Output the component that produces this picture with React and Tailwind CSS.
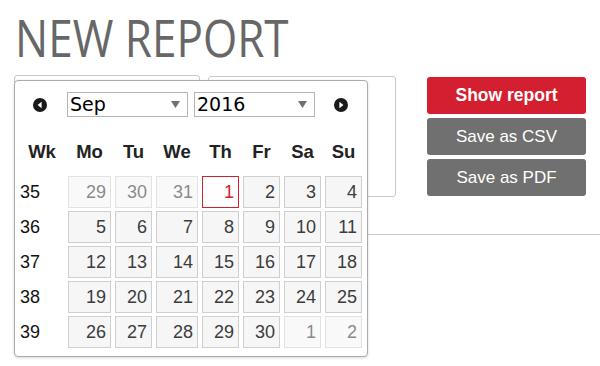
import React from 'react';

const weeks = [
    { wk: 35, days: [[29, 'other'], [30, 'other'], [31, 'other'], [1, 'today'], [2], [3], [4]] },
    { wk: 36, days: [[5], [6], [7], [8], [9], [10], [11]] },
    { wk: 37, days: [[12], [13], [14], [15], [16], [17], [18]] },
    { wk: 38, days: [[19], [20], [21], [22], [23], [24], [25]] },
    { wk: 39, days: [[26], [27], [28], [29], [30], [1, 'other'], [2, 'other']] },
];

const dayNames = ['Mo', 'Tu', 'We', 'Th', 'Fr', 'Sa', 'Su'];

const NavArrow = ({ dir }) => (
    <svg width="14" height="14" viewBox="0 0 14 14" className="shrink-0">
        <circle cx="7" cy="7" r="7" fill="#1a1a1a" />
        {dir === 'prev'
            ? <polygon points="8.6,3.8 8.6,10.2 4.6,7" fill="#fff" />
            : <polygon points="5.4,3.8 5.4,10.2 9.4,7" fill="#fff" />}
    </svg>
);

const FakeSelect = ({ value, className }) => (
    <div className={`h-[25px] w-[121px] border border-[#b5b5b5] bg-white flex items-center pl-[2px] pr-[7px] ${className}`}>
        <span className="flex-1 text-[19px] leading-none text-black font-['DejaVu_Sans',sans-serif]">{value}</span>
        <svg width="9" height="7" viewBox="0 0 9 7">
            <polygon points="0,0 9,0 4.5,7" fill="#707070" />
        </svg>
    </div>
);

const DayCell = ({ n, kind }) => {
    if (kind === 'today') {
        return (
            <div className="h-[32px] border border-[#d0202e] bg-white text-[#d0202e] flex items-center justify-end pr-[4px]">
                {n}
            </div>
        );
    }
    return (
        <div className={`h-[32px] border border-[#cfcfcf] bg-[#f6f6f6] text-[#3c3c3c] flex items-center justify-end pr-[4px] ${kind === 'other' ? 'opacity-60' : ''}`}>
            {n}
        </div>
    );
};

const App = () => {
    return (
        <div className="relative w-[600px] h-[366px] overflow-hidden bg-white font-['Liberation_Sans',Arial,sans-serif]">
            <div className="pl-[15px] pt-[11px]">
                <h1 className="text-[52px] leading-none font-normal text-[#676767] font-['Open_Sans',sans-serif] origin-left scale-x-[0.847] whitespace-nowrap">
                    NEW REPORT
                </h1>
            </div>

            {/* form row behind the picker */}
            <div className="flex items-start mt-[12px] pl-[14px]">
                <div className="w-[186px] h-[36px] border border-[#c8c8c8] rounded-[3px]" />
                <div className="w-[188px] h-[121px] mt-[1px] ml-[8px] border border-[#c8c8c8] rounded-[3px]" />
                <div className="ml-[31px] mt-[2px] w-[159px] flex flex-col gap-[4px]">
                    <button className="h-[37px] rounded-[3px] bg-[#d31f2f] text-white text-[17.5px] font-bold">Show report</button>
                    <button className="h-[37px] rounded-[3px] bg-[#707070] text-white text-[17px]">Save as CSV</button>
                    <button className="h-[37px] rounded-[3px] bg-[#707070] text-white text-[17px]">Save as PDF</button>
                </div>
            </div>
            <div className="ml-[14px] mt-[37px] border-t border-[#cccccc]" />

            {/* datepicker popup */}
            <div className="absolute left-[14px] top-[80px] w-[354px] border border-[#ababab] rounded-[4px] bg-white shadow-[0_1px_3px_rgba(0,0,0,0.15)] pt-[11px] px-[5px] pb-[8px]">
                <div className="flex items-center h-[25px]">
                    <div className="ml-[13px]"><NavArrow dir="prev" /></div>
                    <FakeSelect value="Sep" className="ml-[20px]" />
                    <FakeSelect value="2016" className="ml-[6px]" />
                    <div className="ml-[19px]"><NavArrow dir="next" /></div>
                </div>

                <div className="grid grid-cols-[44px_43px_37px_42px_37px_37px_37px_37px] gap-x-[4px] mt-[21px] h-[26px] items-center text-[18.5px] font-bold text-[#222]">
                    <div className="text-center">Wk</div>
                    {dayNames.map((d) => (
                        <div key={d} className="text-center">{d}</div>
                    ))}
                </div>

                <div className="grid grid-cols-[44px_43px_37px_42px_37px_37px_37px_37px] gap-x-[4px] gap-y-[3px] mt-[12px] text-[18px]">
                    {weeks.map((w) => (
                        <React.Fragment key={w.wk}>
                            <div className="h-[32px] flex items-center text-[#111]">{w.wk}</div>
                            {w.days.map(([n, kind], i) => (
                                <DayCell key={i} n={n} kind={kind} />
                            ))}
                        </React.Fragment>
                    ))}
                </div>
            </div>
        </div>
    );
};

export default App;
